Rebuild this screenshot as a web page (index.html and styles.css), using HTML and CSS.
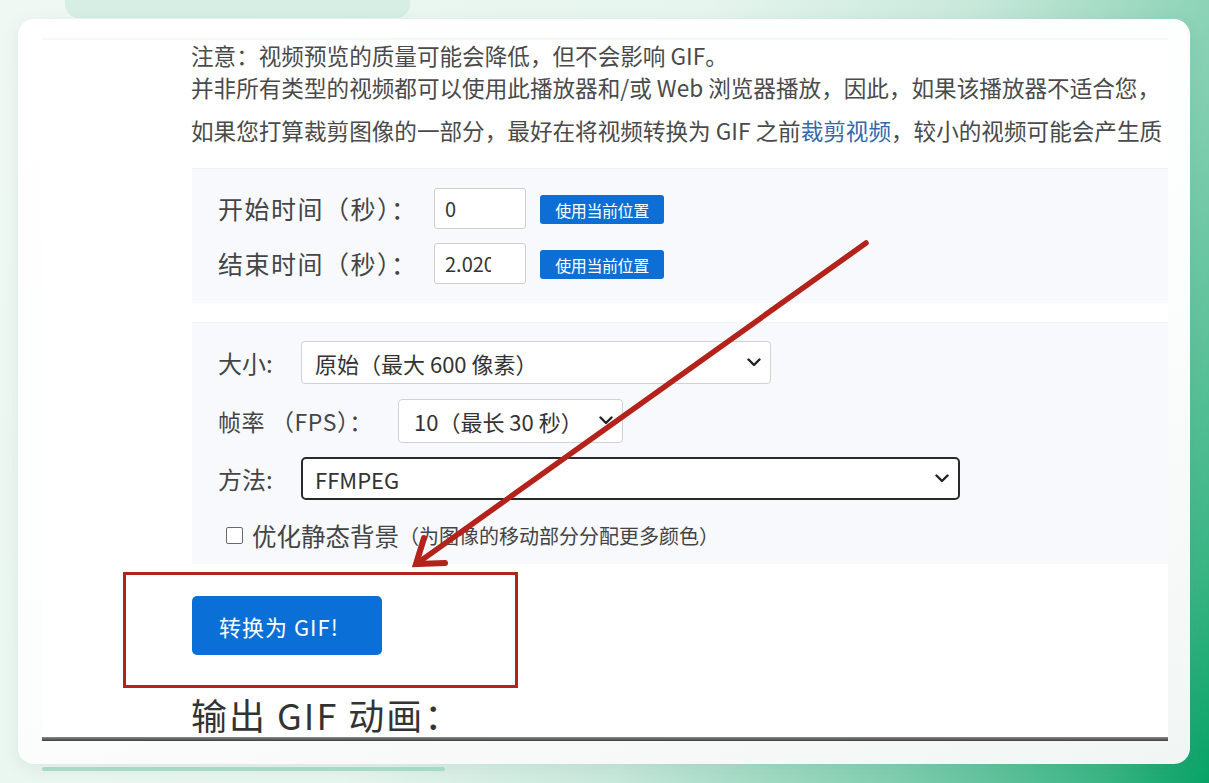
FILE: index.html
```html
<!DOCTYPE html>
<html lang="zh-CN">
<head>
<meta charset="utf-8">
<title>视频转 GIF</title>
<link rel="stylesheet" href="styles.css">
</head>
<body>
<div class="page">
  <div class="top-pill"></div>
  <main class="card">
    <div class="shot">
      <div class="shot-view">
        <div class="notes">
          <p class="note">注意：视频预览的质量可能会降低，但不会影响 GIF。<br>并非所有类型的视频都可以使用此播放器和/或 Web 浏览器播放，因此，如果该播放器不适合您，</p>
          <p class="note">如果您打算裁剪图像的一部分，最好在将视频转换为 GIF 之前<a class="link">裁剪视频</a>，较小的视频可能会产生质</p>
        </div>

        <section class="panel panel-time">
          <div class="row">
            <span class="label label-time">开始时间（秒）：</span>
            <input class="field" type="text" value="0">
            <button class="btn-small" type="button">使用当前位置</button>
          </div>
          <div class="row">
            <span class="label label-time">结束时间（秒）：</span>
            <input class="field" type="text" value="2.020000">
            <button class="btn-small" type="button">使用当前位置</button>
          </div>
        </section>

        <section class="panel panel-opts">
          <div class="row row-opt">
            <span class="label label-short">大小:</span>
            <div class="select select-size">
              <span>原始（最大 600 像素）</span>
              <svg class="chev" viewBox="0 0 14 9" width="14" height="9"><path d="M1.5 1.5 L7 7 L12.5 1.5" fill="none" stroke="#222" stroke-width="2.4" stroke-linecap="round" stroke-linejoin="round"/></svg>
            </div>
          </div>
          <div class="row row-opt row-fps">
            <span class="label label-fps">帧率 （FPS）：</span>
            <div class="select select-fps">
              <span>10（最长 30 秒）</span>
              <svg class="chev" viewBox="0 0 14 9" width="14" height="9"><path d="M1.5 1.5 L7 7 L12.5 1.5" fill="none" stroke="#222" stroke-width="2.4" stroke-linecap="round" stroke-linejoin="round"/></svg>
            </div>
          </div>
          <div class="row row-opt">
            <span class="label label-short">方法:</span>
            <div class="select select-method">
              <span>FFMPEG</span>
              <svg class="chev" viewBox="0 0 14 9" width="14" height="9"><path d="M1.5 1.5 L7 7 L12.5 1.5" fill="none" stroke="#222" stroke-width="2.4" stroke-linecap="round" stroke-linejoin="round"/></svg>
            </div>
          </div>
          <label class="check-row">
            <span class="checkbox"></span>
            <span class="check-main">优化静态背景</span>
            <span class="check-note">（为图像的移动部分分配更多颜色）</span>
          </label>
        </section>

        <button class="btn-convert" type="button">转换为 GIF!</button>

        <h2 class="output-title">输出 GIF 动画：</h2>
      </div>
      <div class="shot-bar"></div>
    </div>
  </main>
  <div class="bottom-line"></div>

  <svg class="annot" viewBox="0 0 1209 783" width="1209" height="783">
    <rect x="124.5" y="573.5" width="392" height="113" fill="none" stroke="#b3231c" stroke-width="3"/>
    <line x1="866" y1="243" x2="419" y2="562" stroke="#b3231c" stroke-width="5.5" stroke-linecap="round"/>
    <polyline points="424,538 416,564 445,563" fill="none" stroke="#b3231c" stroke-width="6" stroke-linejoin="miter" stroke-linecap="round"/>
  </svg>
</div>
</body>
</html>
```

FILE: styles.css
```css
* {
  box-sizing: border-box;
}

html, body {
  margin: 0;
  padding: 0;
}

body {
  width: 1209px;
  height: 783px;
  overflow: hidden;
  font-family: "Noto Sans CJK SC", "Noto Sans", sans-serif;
  color: #4a4a4a;
}

.page {
  position: relative;
  width: 1209px;
  height: 783px;
  overflow: hidden;
  background: linear-gradient(115deg, #f0f8f4 0%, #e6f5ee 45%, #c8e8da 62%, #80ceb0 80%, #3cb686 93%, #06a266 100%);
}

.top-pill {
  width: 345px;
  height: 18px;
  margin-left: 65px;
  background: #d6eee3;
  border-radius: 0 0 14px 14px;
}

.card {
  height: 745px;
  margin: 1px 19px 0 18px;
  padding: 19px 22px 0 24px;
  border-radius: 16px;
  background: linear-gradient(160deg, #ffffff 0%, #fcfdfd 60%, #f1f6f4 100%);
  box-shadow: 0 4px 18px rgba(20, 80, 60, 0.08);
}

.shot {
  height: 703px;
  display: flex;
  flex-direction: column;
  background: #ffffff;
  border-top: 2px solid #f6f7f7;
  overflow: hidden;
}

.shot-view {
  flex: 1;
  overflow: hidden;
  padding-left: 149px;
  white-space: nowrap;
}

.shot-bar {
  height: 4px;
  flex: none;
  background: linear-gradient(#8a8a8a, #3e3e3e);
}

/* notes */
.note {
  margin: 0;
  font-size: 22.6px;
  line-height: 32px;
  color: #4a4a4a;
}

.note + .note {
  margin-top: 11px;
}

.link {
  color: #3767ab;
}

/* panels */
.panel {
  background: #f7f9fc;
  border-top: 1px solid #f1f3f6;
  margin-left: 1px;
  padding-left: 26px;
}

.panel-time {
  margin-top: 21px;
  padding-top: 18px;
  padding-bottom: 19px;
  display: flex;
  flex-direction: column;
  gap: 13px;
}

.row {
  display: flex;
  align-items: center;
  height: 42px;
}

.label {
  color: #454545;
  flex: none;
}

.label-time {
  width: 216px;
  font-size: 25px;
  letter-spacing: 1.5px;
}

.field {
  width: 92px;
  height: 41px;
  padding: 0 34px 0 10px;
  border: 1px solid #cfcfcf;
  border-radius: 3px;
  background: #fff;
  font-family: "Noto Sans CJK SC", "Noto Sans", sans-serif;
  font-size: 20px;
  color: #333;
  outline: none;
}

.btn-small {
  margin-left: 14px;
  width: 124px;
  height: 29px;
  margin-top: 3px;
  padding: 0;
  border: none;
  border-radius: 3px;
  background: #0d6fd6;
  color: #fff;
  font-family: "Noto Sans CJK SC", sans-serif;
  font-size: 16px;
  letter-spacing: -0.4px;
}

.panel-opts {
  margin-top: 19px;
  padding-top: 18px;
  padding-bottom: 9px;
  display: flex;
  flex-direction: column;
  gap: 15px;
}

.row-opt {
  height: 43px;
}

.label-short {
  width: 83px;
  font-size: 24px;
}

.label-fps {
  width: 180px;
  font-size: 23px;
  letter-spacing: 0.6px;
}

.select {
  height: 43px;
  display: flex;
  align-items: center;
  justify-content: space-between;
  padding: 0 9px 0 13px;
  border: 1px solid #d2d2d2;
  border-radius: 4px;
  background: #fff;
  font-size: 22px;
  color: #333;
}

.select-size {
  width: 470px;
}

.select-fps {
  width: 225px;
  height: 44px;
  padding-left: 15px;
}

.select-method {
  width: 659px;
  border: 2px solid #2a2a2a;
  border-radius: 5px;
  padding-left: 12px;
}

.chev {
  flex: none;
}

.check-row {
  display: flex;
  align-items: center;
  height: 40px;
  padding-left: 8px;
}

.checkbox {
  width: 17px;
  height: 17px;
  border: 1.5px solid #6a6a6a;
  border-radius: 2px;
  background: #fff;
  margin-right: 9px;
  flex: none;
}

.check-main {
  font-size: 24.5px;
  color: #444;
}

.check-note {
  font-size: 20px;
  color: #444;
}

/* convert button */
.btn-convert {
  display: block;
  margin: 32px 0 0 1px;
  width: 190px;
  height: 59px;
  border: none;
  border-radius: 5px;
  background: #0b6fd8;
  color: #fff;
  font-family: "Noto Sans CJK SC", sans-serif;
  font-size: 22px;
  letter-spacing: 1px;
  text-align: left;
  padding: 0 0 0 27px;
}

.output-title {
  margin: 35px 0 0 0;
  font-size: 36px;
  line-height: 48px;
  letter-spacing: 2px;
  font-weight: normal;
  color: #333;
}

.bottom-line {
  width: 403px;
  height: 4px;
  margin: 3px 0 0 42px;
  border-radius: 2px;
  background: #a6dac5;
}

.annot {
  position: absolute;
  left: 0;
  top: 0;
  pointer-events: none;
}
```
